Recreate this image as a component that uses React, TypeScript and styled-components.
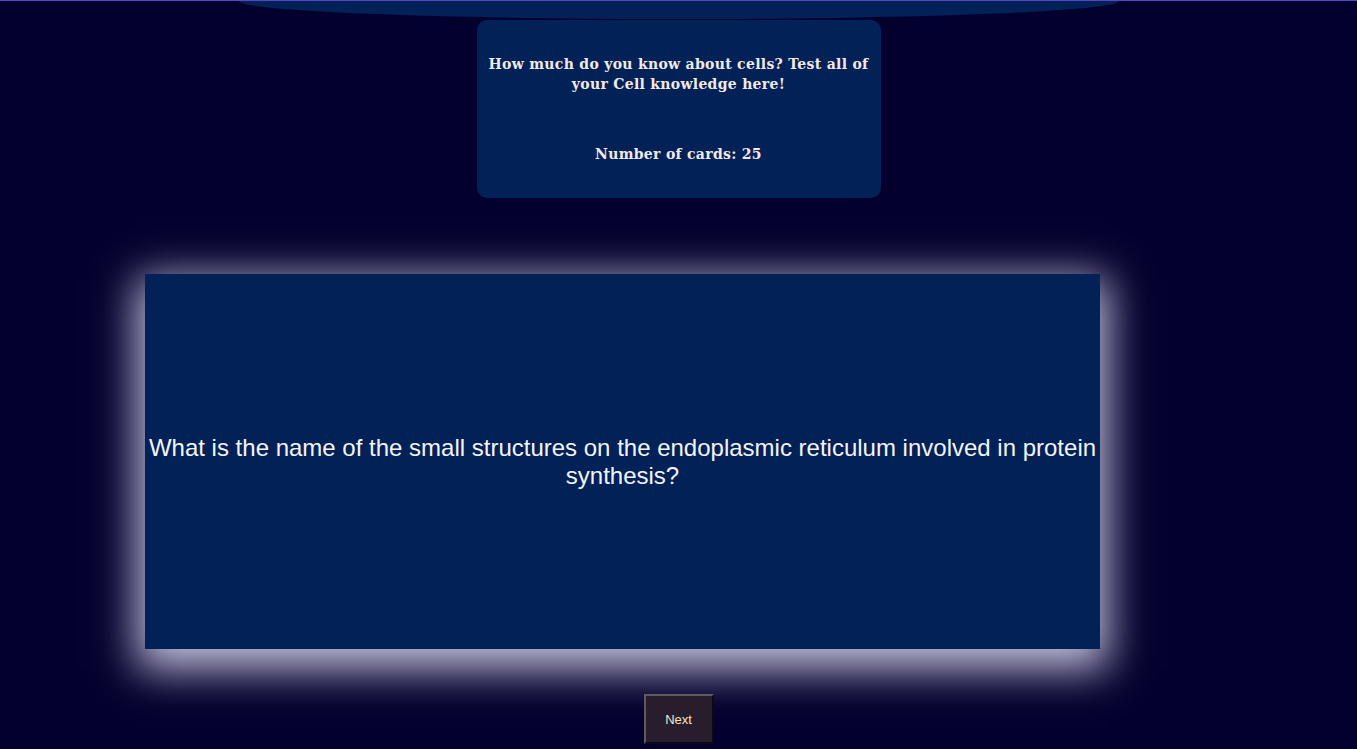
import styled, { createGlobalStyle } from "styled-components";

const GlobalStyle = createGlobalStyle`
  html, body {
    margin: 0;
    padding: 0;
    background: #04002e;
    height: 100%;
    overflow: hidden;
  }
`;

const Page = styled.div`
  display: flex;
  flex-direction: column;
  align-items: center;
  min-height: 749px;
  border-top: 1px solid #5a45c6;
  background: #04002e;
`;

const Arc = styled.div`
  width: 880px;
  height: 18px;
  border-radius: 0 0 440px 440px / 0 0 18px 18px;
  background: #022157;
`;

const InfoCard = styled.div`
  width: 404px;
  height: 178px;
  margin-top: 1px;
  box-sizing: border-box;
  padding: 34px 6px 0;
  border-radius: 10px;
  background: #022157;
  color: #f3e9e6;
  font-family: "DejaVu Serif", Georgia, serif;
  font-weight: bold;
  font-size: 14px;
  letter-spacing: 0.3px;
  line-height: 20px;
  text-align: center;
`;

const InfoText = styled.p<{ $gap?: number }>`
  margin: ${(p) => p.$gap ?? 0}px 0 0;
`;

const FlashCard = styled.div`
  align-self: flex-start;
  width: 955px;
  height: 375px;
  margin: 76px 0 0 145px;
  display: flex;
  align-items: center;
  justify-content: center;
  background: #022157;
  box-shadow: 0 12px 40px 8px rgba(215, 213, 238, 0.9);
  color: #f4f4f8;
  font-family: "Liberation Sans", Arial, sans-serif;
  font-size: 24px;
  line-height: 28px;
  text-align: center;
`;

const Question = styled.p`
  margin: 0;
  padding: 0 2px;
`;

const NextButton = styled.button`
  margin-top: 45px;
  width: 70px;
  height: 50px;
  background: #271d2d;
  color: #f5e3c4;
  border: 2px solid;
  border-color: #5d5a60 #0c0a10 #0c0a10 #5d5a60;
  font-family: "Liberation Sans", Arial, sans-serif;
  font-size: 13px;
  cursor: pointer;
`;

export default function App() {
  return (
    <>
      <GlobalStyle />
      <Page>
        <Arc />
        <InfoCard>
          <InfoText>
            How much do you know about cells? Test all of your Cell knowledge
            here!
          </InfoText>
          <InfoText $gap={50}>Number of cards: 25</InfoText>
        </InfoCard>
        <FlashCard>
          <Question>
            What is the name of the small structures on the endoplasmic
            reticulum involved in protein synthesis?
          </Question>
        </FlashCard>
        <NextButton>Next</NextButton>
      </Page>
    </>
  );
}
